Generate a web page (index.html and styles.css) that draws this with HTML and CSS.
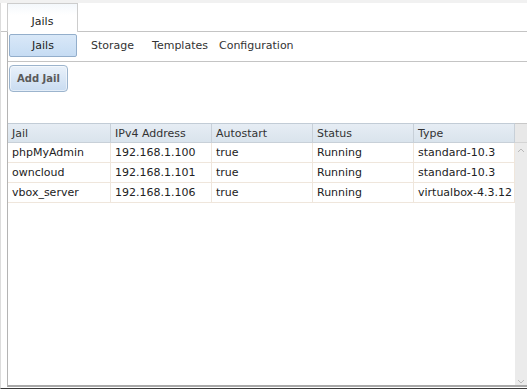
FILE: index.html
```html
<!DOCTYPE html>
<html>
<head>
<meta charset="utf-8">
<link rel="stylesheet" href="styles.css">
</head>
<body>
<div class="page">
  <div class="topstrip"></div>
  <div class="tabbar">
    <div class="tab">Jails</div>
  </div>
  <div class="panel">
    <div class="subtabs">
      <div class="subtab active">Jails</div>
      <div class="sublink storage">Storage</div>
      <div class="sublink templates">Templates</div>
      <div class="sublink config">Configuration</div>
    </div>
    <div class="toolbar">
      <button class="btn">Add Jail</button>
    </div>
    <div class="grid">
      <div class="grid-main">
        <div class="row head">
          <div class="cell">Jail</div>
          <div class="cell">IPv4 Address</div>
          <div class="cell">Autostart</div>
          <div class="cell">Status</div>
          <div class="cell">Type</div>
        </div>
        <div class="row">
          <div class="cell">phpMyAdmin</div>
          <div class="cell">192.168.1.100</div>
          <div class="cell">true</div>
          <div class="cell">Running</div>
          <div class="cell">standard-10.3</div>
        </div>
        <div class="row">
          <div class="cell">owncloud</div>
          <div class="cell">192.168.1.101</div>
          <div class="cell">true</div>
          <div class="cell">Running</div>
          <div class="cell">standard-10.3</div>
        </div>
        <div class="row">
          <div class="cell">vbox_server</div>
          <div class="cell">192.168.1.106</div>
          <div class="cell">true</div>
          <div class="cell">Running</div>
          <div class="cell">virtualbox-4.3.12</div>
        </div>
      </div>
      <div class="scrollbar">
        <div class="scroll-head"></div>
        <div class="scroll-track">
          <svg class="arrow" width="8" height="5" viewBox="0 0 8 5"><path d="M1 4 L4 1 L7 4" fill="none" stroke="#b8b8b8" stroke-width="1"/></svg>
          <svg class="arrow" width="8" height="5" viewBox="0 0 8 5"><path d="M1 1 L4 4 L7 1" fill="none" stroke="#b8b8b8" stroke-width="1"/></svg>
        </div>
      </div>
    </div>
  </div>
</div>
</body>
</html>
```

FILE: styles.css
```css
html, body {
  margin: 0;
  padding: 0;
}
body {
  width: 527px;
  height: 389px;
  overflow: hidden;
  background: #fff;
  font-family: "DejaVu Sans", Verdana, sans-serif;
  font-size: 11px;
  color: #222;
}
.page {
  display: flex;
  flex-direction: column;
  height: 389px;
  box-sizing: border-box;
  border-left: 1px solid #dcdcdc;
  border-bottom: 1px solid #3a3a3a;
}
.topstrip {
  height: 3px;
  background: #f1f1f1;
  margin-left: -1px;
}
.tabbar {
  height: 28px;
  display: flex;
  padding-left: 6px;
  border-bottom: 1px solid #c4c4c4;
}
.tab {
  width: 71px;
  border: 1px solid #cdcdcd;
  border-bottom: none;
  background: linear-gradient(#f4f8fc, #fff 40%);
  display: flex;
  align-items: center;
  justify-content: center;
  padding-top: 6px;
  box-sizing: border-box;
  margin-bottom: -1px;
  height: 29px;
}
.panel {
  flex: 1;
  margin-left: 6px;
  border-left: 1px solid #b4b4b4;
  display: flex;
  flex-direction: column;
  border-bottom: 2px solid #a8a8a8;
  margin-bottom: 1px;
}
.subtabs {
  display: flex;
  align-items: flex-start;
  padding-top: 2px;
  padding-left: 1px;
  border-bottom: 1px solid #c4c4c4;
  box-sizing: border-box;
  height: 30px;
}
.subtab {
  width: 68px;
  height: 23px;
  box-sizing: border-box;
  border: 1px solid #93aecb;
  border-radius: 2px;
  background: linear-gradient(#d9e8f8, #c6dcf3);
  display: flex;
  align-items: center;
  justify-content: center;
}
.sublink {
  height: 23px;
  display: flex;
  align-items: center;
  color: #333;
}
.storage { margin-left: 14px; }
.templates { margin-left: 18px; }
.config { margin-left: 11px; }
.toolbar {
  height: 61px;
  padding: 3px 0 0 1px;
  box-sizing: border-box;
}
.btn {
  width: 59px;
  height: 27px;
  border: 1px solid #9cb4cd;
  border-radius: 4px;
  background: linear-gradient(#e9f1fa, #c9dcf1);
  font-family: "DejaVu Sans", Verdana, sans-serif;
  font-size: 10px;
  font-weight: bold;
  color: #5a5a5a;
  padding: 0;
  box-shadow: inset 0 0 0 1px rgba(255,255,255,0.5);
}
.grid {
  flex: 1;
  display: flex;
}
.grid-main {
  flex: 1;
}
.row {
  display: grid;
  grid-template-columns: 103px 101px 101px 101px 101px;
  height: 20px;
}
.cell {
  box-sizing: border-box;
  padding-left: 4px;
  display: flex;
  align-items: center;
  border-right: 1px solid #efe6dc;
  border-bottom: 1px solid #efe6dc;
  white-space: nowrap;
}
.head {
  background: linear-gradient(#e6edf4, #d9e3ec);
  border-top: 1px solid #c2ccd6;
  box-sizing: border-box;
}
.head .cell {
  border-right: 1px solid #c8d0d8;
  border-bottom: 1px solid #c8d0d8;
  color: #333;
  padding-top: 1px;
}
.scrollbar {
  width: 12px;
  display: flex;
  flex-direction: column;
}
.scroll-head {
  height: 20px;
  box-sizing: border-box;
  background: #e8e8e8;
  border-top: 1px solid #c8c8c8;
  border-bottom: 1px solid #d4d4d4;
}
.scroll-track {
  flex: 1;
  background: #ebebeb;
  display: flex;
  flex-direction: column;
  justify-content: space-between;
  align-items: center;
  padding: 5px 0 1px;
}
.arrow {
  display: block;
}
```
